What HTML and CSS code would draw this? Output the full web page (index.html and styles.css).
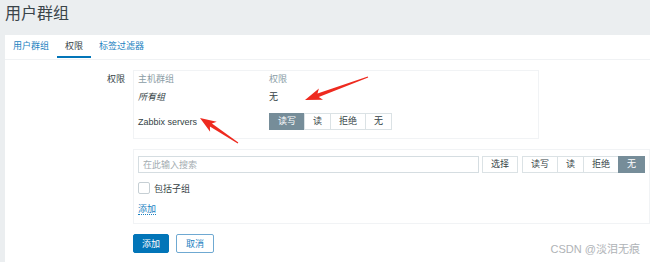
FILE: index.html
```html
<!DOCTYPE html>
<html lang="zh-CN">
<head>
    <meta charset="UTF-8">
    <meta name="viewport" content="width=device-width, initial-scale=1.0">
    <title>用户群组</title>
    <link rel="stylesheet" href="styles.css">
</head>
<body>
    <h1 class="page-title">用户群组</h1>
    <div class="panel">
        <ul class="tabs">
            <li><a href="#">用户群组</a></li>
            <li class="active"><a href="#">权限</a></li>
            <li><a href="#">标签过滤器</a></li>
        </ul>
        <div class="form">
            <div class="form-row">
                <div class="form-label">权限</div>
                <div class="form-field">
                    <div class="perm-table">
                        <div class="th">主机群组</div>
                        <div class="th">权限</div>
                        <div class="td"><em>所有组</em></div>
                        <div class="td">无</div>
                        <div class="td row3">Zabbix servers</div>
                        <div class="td row3">
                            <div class="seg">
                                <button class="on">读写</button><button>读</button><button>拒绝</button><button>无</button>
                            </div>
                        </div>
                    </div>
                </div>
            </div>
            <div class="form-row">
                <div class="form-label"></div>
                <div class="form-field">
                    <div class="group-box">
                        <div class="search-row">
                            <input class="search" type="text" placeholder="在此输入搜索">
                            <button class="btn-select">选择</button>
                            <div class="seg">
                                <button>读写</button><button>读</button><button>拒绝</button><button class="on">无</button>
                            </div>
                        </div>
                        <label class="check-row"><span class="checkbox"></span>包括子组</label>
                        <div class="link-row"><a href="#" class="link">添加</a></div>
                    </div>
                </div>
            </div>
            <div class="form-row">
                <div class="form-label"></div>
                <div class="form-field actions">
                    <button class="btn-primary">添加</button>
                    <button class="btn-alt">取消</button>
                </div>
            </div>
        </div>
    </div>

    <div class="watermark">CSDN @淡泪无痕</div>

    <svg class="arrows" width="650" height="262" viewBox="0 0 650 262">
        <polygon points="368.2,77.5 318.8,96.9 323.0,99.8 305,100 318.9,88.5 317.5,93.5 367.8,76.5"/>
        <polygon points="238.3,142.6 211.9,123.6 216.7,121.8 200,118 210.1,131.8 209.9,126.6 237.7,143.4"/>
    </svg>
</body>
</html>
```

FILE: styles.css
```css
body, html {
    margin: 0;
    padding: 0;
}
body {
    background-color: #ebeef0;
    font-family: "Liberation Sans", "Noto Sans CJK SC", sans-serif;
    font-size: 9px;
    color: #343f45;
    position: relative;
    height: 262px;
    overflow: hidden;
}
.page-title {
    margin: 0;
    height: 35px;
    padding-left: 5px;
    font-size: 16px;
    font-weight: normal;
    line-height: 28px;
    color: #3a4449;
}
.panel {
    margin-left: 5px;
    background-color: #ffffff;
    height: 227px;
}

/* tabs */
.tabs {
    list-style: none;
    margin: 0;
    padding: 0;
    display: flex;
    align-items: flex-start;
    height: 24px;
    border-bottom: 1px solid #f0f2f4;
}
.tabs a {
    display: block;
    padding: 5px 8px 4px;
    line-height: 12px;
    border-bottom: 2px solid transparent;
    color: #1a7fbf;
    text-decoration: none;
}
.tabs .active a {
    color: #343f45;
    border-bottom-color: #0275b8;
}

/* form */
.form {
    padding-top: 10px;
}
.form-row {
    display: grid;
    grid-template-columns: 120px 1fr;
    column-gap: 8px;
    margin-bottom: 10px;
}
.form-label {
    text-align: right;
    padding-top: 2px;
    line-height: 14px;
}

.perm-table {
    width: 396px;
    display: grid;
    grid-template-columns: 131px 1fr;
    padding: 1px 4px 3px;
    border: 1px solid #f1f3f5;
}
.th {
    line-height: 14px;
    color: #8a9ca5;
}
.td {
    line-height: 22px;
}
.td em {
    font-style: italic;
}
.row3 {
    height: 27px;
    display: flex;
    align-items: center;
}

.seg {
    display: inline-flex;
}
.seg button,
.btn-select {
    height: 17px;
    padding: 0 8px;
    border: 1px solid #dbe2e5;
    background-color: #ffffff;
    color: #343f45;
    font-family: inherit;
    font-size: 9px;
    line-height: 15px;
}
.seg button + button {
    margin-left: -1px;
}
.seg button.on {
    background-color: #768d99;
    border-color: #768d99;
    color: #ffffff;
}

.group-box {
    border: 1px solid #f1f3f5;
    padding: 6px 4px 8px;
}
.search-row {
    display: flex;
}
.search {
    flex: 1;
    height: 17px;
    box-sizing: border-box;
    margin: 0;
    padding: 0 4px;
    border: 1px solid #d5dde1;
    font-family: inherit;
    font-size: 9px;
}
.search::placeholder {
    color: #a3acb1;
}
.btn-select {
    margin-left: 3px;
}
.search-row .seg {
    margin-left: 4px;
}

.check-row {
    display: flex;
    align-items: center;
    height: 16px;
    margin-top: 7px;
}
.checkbox {
    width: 10px;
    height: 10px;
    border: 1px solid #c6cfd4;
    border-radius: 2px;
    margin-right: 4px;
}
.link-row {
    margin-top: 7px;
    line-height: 12px;
}
.link {
    color: #1a7fbf;
    text-decoration: none;
    border-bottom: 1px dotted #1a7fbf;
}

.actions {
    display: flex;
    gap: 7px;
}
.btn-primary,
.btn-alt {
    height: 19px;
    padding: 0 8px;
    border: 1px solid #0275b8;
    border-radius: 2px;
    font-family: inherit;
    font-size: 9px;
}
.btn-primary {
    background-color: #0275b8;
    color: #ffffff;
}
.btn-alt {
    background-color: #ffffff;
    color: #1a7fbf;
    border-color: #6fa9d2;
    padding: 0 9px;
}

.watermark {
    position: absolute;
    right: 10px;
    bottom: 6px;
    font-size: 11px;
    color: #afb3b7;
}
.arrows {
    position: absolute;
    left: 0;
    top: 0;
    pointer-events: none;
}
.arrows polygon {
    fill: #ee2a1f;
}
```
